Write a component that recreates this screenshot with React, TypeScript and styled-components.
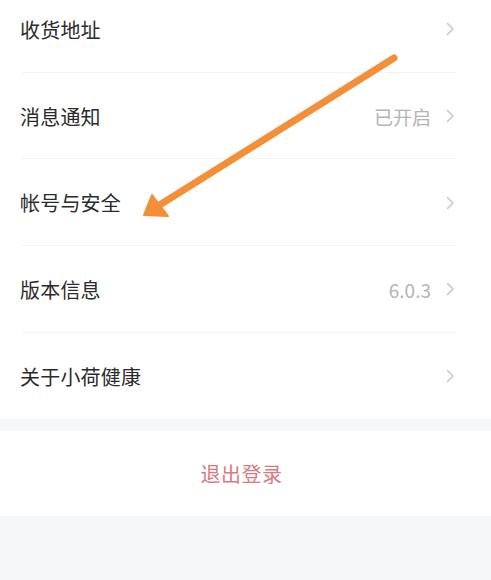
import { FC } from 'react'
import styled, { createGlobalStyle } from 'styled-components'

const Global = createGlobalStyle`
  html, body { margin: 0; padding: 0; background: #f6f7f9; }
  body { font-family: 'Noto Sans CJK SC', 'Noto Sans', sans-serif; }
`

const Page = styled.main`
  position: relative;
  width: 491px;
  height: 580px;
  overflow: hidden;
  background: #f6f7f9;
`

const Menu = styled.section`
  background: #fff;
  margin-top: -14px;
`

const Row = styled.div<{ $last?: boolean }>`
  height: 86.7px;
  display: flex;
  align-items: center;
  justify-content: space-between;
  padding: 0 36px 0 20px;
  position: relative;
  &:after{
    content: '';
    display: ${p => (p.$last ? 'none' : 'block')};
    position: absolute;
    left: 22px;
    right: 34px;
    bottom: 0;
    height: 1px;
    background: #f4f4f4;
  }
`

const Label = styled.span`
  font-size: 20px;
  color: #2b2b2b;
  letter-spacing: 0.2px;
`

const Right = styled.div`
  display: flex;
  align-items: center;
  gap: 14px;
`

const Value = styled.span`
  font-size: 19px;
  color: #b4b4b4;
`

const Chevron = styled.svg`
  width: 10px;
  height: 14px;
  display: block;
`

const Gap = styled.div`
  height: 12px;
`

const Logout = styled.div`
  height: 85px;
  background: #fff;
  display: flex;
  align-items: center;
  justify-content: center;
  padding-right: 8px;
  font-size: 20px;
  color: #d87a80;
  letter-spacing: 0.5px;
`

const Arrow = styled.svg`
  position: absolute;
  left: 0;
  top: 0;
  pointer-events: none;
`

const rows = [
  { label: '收货地址' },
  { label: '消息通知', value: '已开启' },
  { label: '帐号与安全' },
  { label: '版本信息', value: '6.0.3' },
  { label: '关于小荷健康' },
]

const Arr: FC = () => (
  <Chevron viewBox="0 0 10 14">
    <path d="M2.5 1.5 L8 7 L2.5 12.5" fill="none" stroke="#c9c9c9" strokeWidth="1.6" strokeLinecap="round" strokeLinejoin="round" />
  </Chevron>
)

export default function App() {
  return (
    <Page>
      <Global />
      <Menu>
        {rows.map((r, i) => (
          <Row key={r.label} $last={i === rows.length - 1}>
            <Label>{r.label}</Label>
            <Right>
              {r.value && <Value>{r.value}</Value>}
              <Arr />
            </Right>
          </Row>
        ))}
      </Menu>
      <Gap />
      <Logout>退出登录</Logout>
      <Arrow width="491" height="580" viewBox="0 0 491 580">
        <line x1="394" y1="58" x2="158" y2="206" stroke="#f28f38" strokeWidth="7" strokeLinecap="round" />
        <polygon points="144,215 152,195 168,216" fill="#f28f38" stroke="#f28f38" strokeWidth="2" strokeLinejoin="round" />
      </Arrow>
    </Page>
  )
}
